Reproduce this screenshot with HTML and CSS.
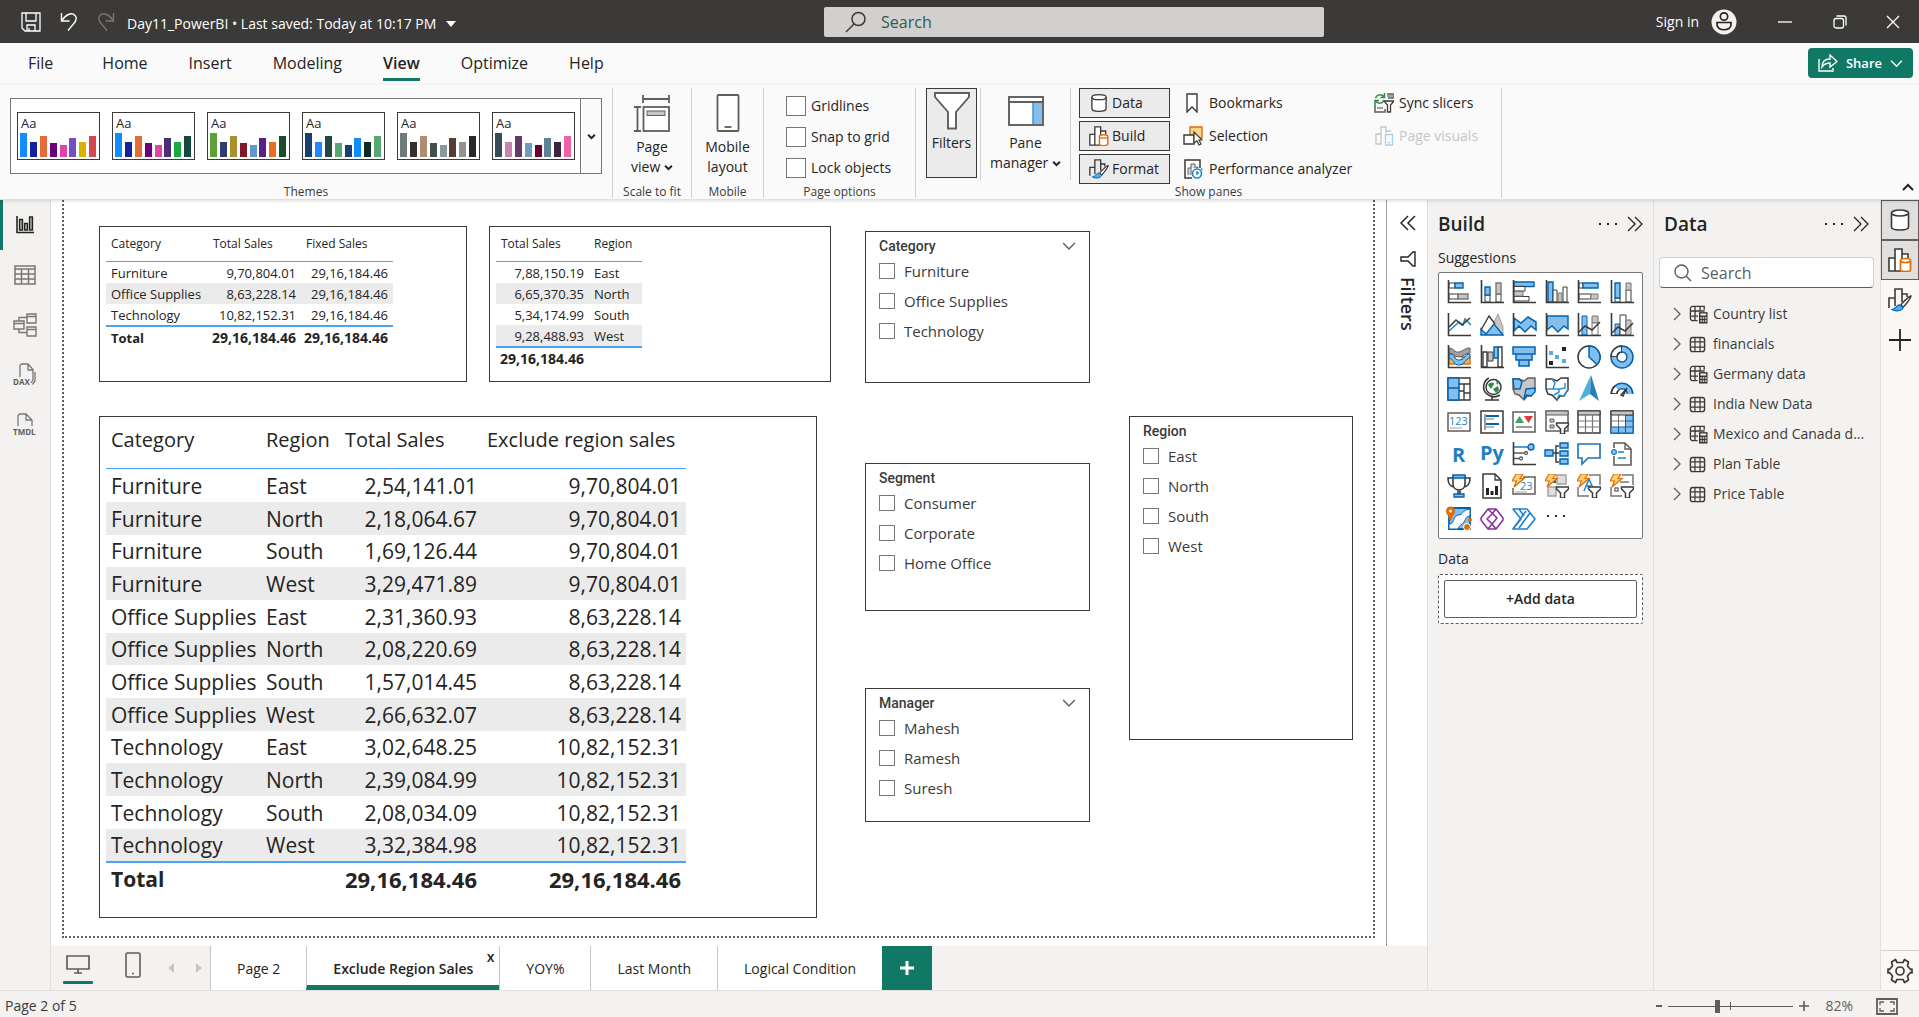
FILE: index.html
```html
<!DOCTYPE html>
<html lang="en">
<head>
<meta charset="utf-8">
<title>Day11_PowerBI</title>
<link rel="stylesheet" href="styles.css">
</head>
<body>
<svg class="defs" aria-hidden="true">
  <symbol id="bars" viewBox="0 0 79 25">
    <rect x="0" y="1" width="7" height="24" fill="var(--a)"/><rect x="10" y="10" width="7" height="15" fill="var(--b)"/>
    <rect x="20" y="4" width="7" height="21" fill="var(--c)"/><rect x="30" y="11" width="7" height="14" fill="var(--d)"/>
    <rect x="40" y="13" width="7" height="12" fill="var(--e)"/><rect x="49" y="6" width="7" height="19" fill="var(--f)"/>
    <rect x="59" y="10" width="7" height="15" fill="var(--g)"/><rect x="69" y="4" width="7" height="21" fill="var(--h)"/>
  </symbol>
  <symbol id="caret" viewBox="0 0 8 8"><path d="M1 2.5 4 5.5 7 2.5" fill="none" stroke="currentColor" stroke-width="1.8"/></symbol>
  <symbol id="chev" viewBox="0 0 12 12"><path d="M1 3.5 6 8.5 11 3.5" fill="none" stroke="currentColor" stroke-width="1.2"/></symbol>
  <symbol id="next" viewBox="0 0 16 16"><path d="M1 1 8 8 1 15M8 1 15 8 8 15" fill="none" stroke="currentColor" stroke-width="1.3"/></symbol>
  <symbol id="prev" viewBox="0 0 16 16"><path d="M8 1 1 8 8 15M15 1 8 8 15 15" fill="none" stroke="currentColor" stroke-width="1.5"/></symbol>
  <symbol id="cylinder" viewBox="0 0 24 24"><path d="M3.500 5v14c0 2 4 3 8.500 3s8.500-1 8.500-3V5" fill="#fff" stroke="#3b3a39" stroke-width="1.6"/><ellipse cx="12" cy="5" rx="8.500" ry="3" fill="#fff" stroke="#3b3a39" stroke-width="1.6"/></symbol>
  <symbol id="build" viewBox="0 0 24 24"><path d="M1 23V10h6v13zM7 23V1h7v22zM14 10V6h6v4" fill="#fff" stroke="#3b3a39" stroke-width="1.6"/><path d="M12.500 13v9c0 2 10 2 10 0v-9" fill="#fff" stroke="#e06c00" stroke-width="1.7"/><ellipse cx="17.500" cy="12.500" rx="5" ry="2" fill="#fff" stroke="#e06c00" stroke-width="1.7"/></symbol>
  <symbol id="format" viewBox="0 0 24 24"><path d="M1 20V10h6V1h7v8M14 6h5v3M7 10v8M14 9v5" fill="none" stroke="#3b3a39" stroke-width="1.6"/><path d="M23 8c-2 0-10 8-10 9l2 2c1 0 8-9 8-11z" fill="#fff" stroke="#3b3a39" stroke-width="1.400"/><path d="M12.500 17c-4-1-4 4-8.500 4.500 3 2 10.500 2 11-2z" fill="#5aa9e6" stroke="#0063b1" stroke-width="1.200"/></symbol>
  <symbol id="dots" viewBox="0 0 20 4"><path d="M1 1h2v2H1zM9 1h2v2H9zM17 1h2v2h-2z" fill="currentColor"/></symbol>
  <symbol id="table" viewBox="0 0 18 18"><rect x="1.500" y="1.500" width="15" height="15" rx="2.500" fill="none" stroke="currentColor" stroke-width="1.500"/><path d="M6.300 1.500v15M11.700 1.500v15M1.500 6.300h15M1.500 11.700h15" stroke="currentColor" stroke-width="1.300"/></symbol>
  <symbol id="calctable" viewBox="0 0 20 20"><path d="M9 16.500H4a2.500 2.500 0 0 1-2.500-2.500V4A2.500 2.500 0 0 1 4 1.500h12V5M6.300 1.500v15M11.700 1.500v5M1.500 6.300h15M1.500 11.700h8" fill="none" stroke="currentColor" stroke-width="1.400"/><rect x="10.500" y="7.500" width="9" height="12" fill="#3b3a39"/><path d="M12 9h6v2h-6zM12 13h1.500v1.500H12zM14.500 13H16v1.500h-1.500zM17 13h1.500v1.500H17zM12 16h1.500v1.500H12zM14.500 16H16v1.500h-1.500zM17 16h1.500v1.500H17z" fill="#f3f2f1"/></symbol>
  <symbol id="axes" viewBox="0 0 24 24"><path d="M1.500 0v22.500H24" fill="none" stroke="#3b3a39" stroke-width="1.600"/></symbol>
  <symbol id="bolt" viewBox="0 0 24 24"><path d="M4 0h7L8 4.500h4L2 13l2.500-6H0z" fill="#fcd17a" stroke="#e06c00" stroke-width="1.200"/></symbol>
  <symbol id="funnel" viewBox="0 0 24 24"><path d="M11.500 13h12v2l-4 4v5h-4v-5l-4-4z" fill="#fff" stroke="#3b3a39" stroke-width="1.500"/></symbol>
</svg>

<header class="titlebar">
  <div class="title-left">
    <button class="bare" aria-label="Save"><svg width="20" height="20" viewBox="0 0 20 20" fill="none" stroke="#fff" stroke-width="1.300"><path d="M1 1h18v18H4l-3-3zM5 1v8h10V1M6 19v-6h8v6M8 16v3"/></svg></button>
    <button class="bare" aria-label="Undo"><svg width="18" height="20" viewBox="0 0 18 20" fill="none" stroke="#fff" stroke-width="1.400"><path d="M1.500 1v8h8M2 8.500C6 2 12 0 15 3.500c3 3.500 0 7-2 9L8 18.500"/></svg></button>
    <button class="bare" aria-label="Redo"><svg width="18" height="20" viewBox="0 0 18 20" fill="none" stroke="#797775" stroke-width="1.400"><path d="M16.500 1v8h-8M16 8.500C12 2 6 0 3 3.500c-3 3.500 0 7 2 9l5 6"/></svg></button>
    <button class="bare doc">Day11_PowerBI • Last saved: Today at 10:17 PM <svg width="10" height="6" viewBox="0 0 10 6"><path d="M0 0h10L5 6z" fill="#fff"/></svg></button>
  </div>
  <label class="search-top"><svg width="22" height="22" viewBox="0 0 22 22" fill="none" stroke="#3b3a39" stroke-width="1.500"><circle cx="13.500" cy="8" r="6.500"/><path d="M9 13 1 21"/></svg><input type="text" placeholder="Search" aria-label="Search"></label>
  <div class="title-right">
    <button class="bare signin">Sign in <svg width="26" height="26" viewBox="0 0 26 26"><circle cx="13" cy="13" r="12.500" fill="#f3f2f1"/><circle cx="13" cy="7.500" r="3.700" fill="none" stroke="#252423" stroke-width="1.700"/><path d="M6 13.500h14v2c0 7-14 7-14 0z" fill="none" stroke="#252423" stroke-width="1.700"/></svg></button>
    <button class="bare win" aria-label="Minimize"><svg width="14" height="14" viewBox="0 0 14 14"><path d="M0 7h14" stroke="#fff" stroke-width="1.300"/></svg></button>
    <button class="bare win" aria-label="Restore"><svg width="14" height="14" viewBox="0 0 14 14" fill="none" stroke="#fff" stroke-width="1.300"><rect x="1" y="3.500" width="9.500" height="9.500" rx="2"/><path d="M3.500 1H11c1.500 0 2 .5 2 2v7.500"/></svg></button>
    <button class="bare win" aria-label="Close"><svg width="14" height="14" viewBox="0 0 14 14"><path d="M1 1l12 12M13 1 1 13" stroke="#fff" stroke-width="1.300"/></svg></button>
  </div>
</header>

<nav class="menu">
  <a href="#" class="file">File</a><a href="#">Home</a><a href="#">Insert</a><a href="#">Modeling</a><a href="#" class="on">View</a><a href="#">Optimize</a><a href="#">Help</a>
  <button class="share"><svg width="20" height="18" viewBox="0 0 20 18" fill="none" stroke="#fff" stroke-width="1.400"><path d="M1 5v12h14v-3"/><path d="M4 13c0-5 3-8 8-8V1l7 6.500-7 5.500V9c-4 0-6 1-8 4z"/></svg>Share<svg width="13" height="13"><use href="#chev"/></svg></button>
</nav>

<div class="ribbon">
  <section class="group g-themes">
    <div class="gbody"><div class="gallery">
      <button class="thumb t1" aria-label="Theme 1"><span>Aa</span><svg width="79" height="25"><use href="#bars"/></svg></button>
      <button class="thumb t2" aria-label="Theme 2"><span>Aa</span><svg width="79" height="25"><use href="#bars"/></svg></button>
      <button class="thumb t3" aria-label="Theme 3"><span>Aa</span><svg width="79" height="25"><use href="#bars"/></svg></button>
      <button class="thumb t4" aria-label="Theme 4"><span>Aa</span><svg width="79" height="25"><use href="#bars"/></svg></button>
      <button class="thumb t5" aria-label="Theme 5"><span>Aa</span><svg width="79" height="25"><use href="#bars"/></svg></button>
      <button class="thumb t6" aria-label="Theme 6"><span>Aa</span><svg width="79" height="25"><use href="#bars"/></svg></button>
      <button class="more" aria-label="More themes"><svg width="9" height="9"><use href="#caret"/></svg></button>
    </div></div>
    <h2>Themes</h2>
  </section>
  <section class="group g-scale">
    <div class="gbody"><button class="big"><svg width="38" height="38" viewBox="0 0 38 38" fill="none" stroke="#605e5c" stroke-width="1.800"><path d="M10 1v8M36 1v8M10 5h26M1 13h7M1 37h7M4.500 13v24"/><rect x="10.500" y="13" width="25.500" height="24" fill="#fff"/><rect x="14" y="17" width="18" height="4.500" fill="#c8c6c4" stroke-width="1"/></svg><span>Page<br>view <svg width="9" height="9"><use href="#caret"/></svg></span></button></div>
    <h2>Scale to fit</h2>
  </section>
  <section class="group g-mobile">
    <div class="gbody"><button class="big"><svg width="38" height="38" viewBox="0 0 38 38" fill="#fff" stroke="#605e5c" stroke-width="1.800"><rect x="8.500" y="1" width="21" height="36" rx="1"/><path d="M15.500 33h7"/></svg><span>Mobile<br>layout</span></button></div>
    <h2>Mobile</h2>
  </section>
  <section class="group g-options">
    <div class="gbody checks">
      <label><input type="checkbox">Gridlines</label>
      <label><input type="checkbox">Snap to grid</label>
      <label><input type="checkbox">Lock objects</label>
    </div>
    <h2>Page options</h2>
  </section>
  <section class="group g-panes">
    <div class="gbody panes">
      <button class="filters on"><svg width="36" height="38" viewBox="0 0 36 38"><path d="M1 1h34v4L22 20v16.500h-8V20L1 5z" fill="#fff" stroke="#605e5c" stroke-width="1.900"/></svg>Filters</button>
      <button class="big manager"><svg width="36" height="30" viewBox="0 0 36 30"><rect x="1" y="1" width="34" height="28" fill="#fff" stroke="#605e5c" stroke-width="1.900"/><path d="M1 6h34" stroke="#605e5c" stroke-width="2"/><path d="M25 7h9v21h-9z" fill="#83beec"/><path d="M25 7v21" stroke="#3a96dd" stroke-width="1.500"/></svg><span>Pane<br>manager <svg width="9" height="9"><use href="#caret"/></svg></span></button>
      <div class="pcol pressed">
        <button><svg width="20" height="20"><use href="#cylinder"/></svg>Data</button>
        <button><svg width="20" height="20"><use href="#build"/></svg>Build</button>
        <button><svg width="20" height="20"><use href="#format"/></svg>Format</button>
      </div>
      <div class="pcol plain">
        <button><svg width="20" height="20" viewBox="0 0 20 20"><path d="M4 1h10v18l-5-5-5 5z" fill="#fff" stroke="#3b3a39" stroke-width="1.400"/></svg>Bookmarks</button>
        <button><svg width="20" height="20" viewBox="0 0 20 20"><path d="M7 1h12v11H7z" fill="#fcd58c" stroke="#e06c00" stroke-width="1.400"/><path d="M1 9h10v9H1z" fill="#fff" stroke="#3b3a39" stroke-width="1.400"/><path d="M11 6v11l3-2 2 4 2-1-2-4h3z" fill="#fff" stroke="#3b3a39" stroke-width="1.200"/></svg>Selection</button>
        <button><svg width="20" height="20" viewBox="0 0 20 20"><path d="M9 19H2V1h15v8" fill="#fff" stroke="#3b3a39" stroke-width="1.500"/><path d="M5 16V9h3v7M8 9V5h4v4" fill="#e1dfdd" stroke="#605e5c"/><circle cx="14" cy="14.500" r="4.500" fill="#fff" stroke="#1f87c9" stroke-width="1.600"/><path d="M14 12v3l2-1.500M12.500 8.500h3M18 9.500l1.500 1.500" stroke="#1f87c9" stroke-width="1.400" fill="none"/></svg>Performance analyzer</button>
      </div>
      <div class="pcol plain last">
        <button><svg width="20" height="20" viewBox="0 0 20 20" fill="none"><path d="M1 12v7h10v-3M13 1h6v4h-5" stroke="#605e5c" stroke-width="1.500"/><path d="M3 15h6M13 3h6" stroke="#a19f9d" stroke-width="2"/><path d="M10 8h10l-3.500 4v7h-3v-7z" fill="#fff" stroke="#3b3a39" stroke-width="1.300"/><path d="M1.500 5C3 1 8 1 10 4M10.500 0v4.500H6.500M10 7c-1.500 4-6 4-8.500 1M1 12V7.500h4" stroke="#2e8b45" stroke-width="1.500"/></svg>Sync slicers</button>
        <button disabled><svg width="20" height="20" viewBox="0 0 20 20" fill="none" stroke="#c8c6c4" stroke-width="1.300"><path d="M8 18H2V8h5M7 18V1h5v6M12 5h5"/><path d="M11.500 8.500h7v10.500h-7zM14 16.500h2" stroke="#a9d0ee"/></svg>Page visuals</button>
      </div>
    </div>
    <h2>Show panes</h2>
  </section>
  <button class="bare collapse" aria-label="Collapse ribbon"><svg width="12" height="8" viewBox="0 0 12 8"><path d="M1 7 6 2l5 5" fill="none" stroke="#252423" stroke-width="2"/></svg></button>
</div>

<div class="work">
  <nav class="views">
    <button class="on" aria-label="Report view"><svg width="20" height="20" viewBox="0 0 20 20" fill="#a19f9d" stroke="#252423" stroke-width="1.300"><path d="M2 1v16.500h17" fill="none" stroke-width="1.600"/><path d="M4.500 4.500h3V15h-3zM9.500 8.500h3V15h-3zM14.500 2h3v13h-3z"/></svg></button>
    <button aria-label="Table view"><svg width="22" height="20" viewBox="0 0 22 20" fill="none" stroke="#797775" stroke-width="1.500"><path d="M1 1h20v18H1zM1 4h20M1 9h20M1 14h20M7.500 4v15M14.500 4v15"/></svg></button>
    <button aria-label="Model view"><svg width="24" height="24" viewBox="0 0 24 24" fill="none" stroke="#797775" stroke-width="1.400"><path d="M1 8h10v8H1zM1 10.500h10M14 1h9v9h-9zM14 3.500h9M14 14h9v9h-9zM14 16.500h9M6 8V4.500h8M6 16v3.500h8"/></svg></button>
    <button aria-label="DAX query view"><svg width="24" height="24" viewBox="0 0 24 24" fill="none" stroke="#797775" stroke-width="1.300"><path d="M7 14V2.500L8.500 1H15l5 5.500V17l-2 3M15 1v6h5M22 9v9l-2.500 3.500"/><text x="0" y="22" class="glyph">DAX</text></svg></button>
    <button aria-label="TMDL view"><svg width="24" height="24" viewBox="0 0 24 24" fill="none" stroke="#797775" stroke-width="1.300"><path d="M5 13V2.500L6.500 1H13l6 6v6M13 1v6h6"/><text x="0" y="22" class="glyph">TMDL</text></svg></button>
  </nav>

  <div class="center">
    <div class="center-top">
    <main class="canvas">
      <div class="page">
        <div class="visual v1">
          <table class="data small">
            <colgroup><col class="w102"><col class="w93"><col class="w92"></colgroup>
            <thead><tr><th>Category</th><th>Total Sales</th><th>Fixed Sales</th></tr></thead>
            <tbody>
              <tr><td>Furniture</td><td class="n">9,70,804.01</td><td class="n">29,16,184.46</td></tr>
              <tr><td>Office Supplies</td><td class="n">8,63,228.14</td><td class="n">29,16,184.46</td></tr>
              <tr><td>Technology</td><td class="n">10,82,152.31</td><td class="n">29,16,184.46</td></tr>
            </tbody>
            <tfoot><tr><td>Total</td><td class="n">29,16,184.46</td><td class="n">29,16,184.46</td></tr></tfoot>
          </table>
        </div>
        <div class="visual v2">
          <table class="data small">
            <colgroup><col class="w93"><col class="w53"></colgroup>
            <thead><tr><th>Total Sales</th><th>Region</th></tr></thead>
            <tbody>
              <tr><td class="n">7,88,150.19</td><td>East</td></tr>
              <tr><td class="n">6,65,370.35</td><td>North</td></tr>
              <tr><td class="n">5,34,174.99</td><td>South</td></tr>
              <tr><td class="n">9,28,488.93</td><td>West</td></tr>
            </tbody>
            <tfoot><tr><td class="n">29,16,184.46</td><td></td></tr></tfoot>
          </table>
        </div>
        <div class="visual v3">
          <table class="data large">
            <colgroup><col class="w155"><col class="w79"><col class="w142"><col class="w204"></colgroup>
            <thead><tr><th>Category</th><th>Region</th><th>Total Sales</th><th>Exclude region sales</th></tr></thead>
            <tbody>
              <tr><td>Furniture</td><td>East</td><td class="n">2,54,141.01</td><td class="n">9,70,804.01</td></tr>
              <tr><td>Furniture</td><td>North</td><td class="n">2,18,064.67</td><td class="n">9,70,804.01</td></tr>
              <tr><td>Furniture</td><td>South</td><td class="n">1,69,126.44</td><td class="n">9,70,804.01</td></tr>
              <tr><td>Furniture</td><td>West</td><td class="n">3,29,471.89</td><td class="n">9,70,804.01</td></tr>
              <tr><td>Office Supplies</td><td>East</td><td class="n">2,31,360.93</td><td class="n">8,63,228.14</td></tr>
              <tr><td>Office Supplies</td><td>North</td><td class="n">2,08,220.69</td><td class="n">8,63,228.14</td></tr>
              <tr><td>Office Supplies</td><td>South</td><td class="n">1,57,014.45</td><td class="n">8,63,228.14</td></tr>
              <tr><td>Office Supplies</td><td>West</td><td class="n">2,66,632.07</td><td class="n">8,63,228.14</td></tr>
              <tr><td>Technology</td><td>East</td><td class="n">3,02,648.25</td><td class="n">10,82,152.31</td></tr>
              <tr><td>Technology</td><td>North</td><td class="n">2,39,084.99</td><td class="n">10,82,152.31</td></tr>
              <tr><td>Technology</td><td>South</td><td class="n">2,08,034.09</td><td class="n">10,82,152.31</td></tr>
              <tr><td>Technology</td><td>West</td><td class="n">3,32,384.98</td><td class="n">10,82,152.31</td></tr>
            </tbody>
            <tfoot><tr><td>Total</td><td></td><td class="n">29,16,184.46</td><td class="n">29,16,184.46</td></tr></tfoot>
          </table>
        </div>
        <div class="visual slicer s-category">
          <h3>Category<svg width="14" height="14"><use href="#chev"/></svg></h3>
          <label><input type="checkbox">Furniture</label><label><input type="checkbox">Office Supplies</label><label><input type="checkbox">Technology</label>
        </div>
        <div class="visual slicer s-segment">
          <h3>Segment</h3>
          <label><input type="checkbox">Consumer</label><label><input type="checkbox">Corporate</label><label><input type="checkbox">Home Office</label>
        </div>
        <div class="visual slicer s-manager">
          <h3>Manager<svg width="14" height="14"><use href="#chev"/></svg></h3>
          <label><input type="checkbox">Mahesh</label><label><input type="checkbox">Ramesh</label><label><input type="checkbox">Suresh</label>
        </div>
        <div class="visual slicer s-region">
          <h3>Region</h3>
          <label><input type="checkbox">East</label><label><input type="checkbox">North</label><label><input type="checkbox">South</label><label><input type="checkbox">West</label>
        </div>
      </div>
    </main>
    <aside class="filterpane">
      <button class="bare" aria-label="Expand filters"><svg width="16" height="16"><use href="#prev"/></svg></button>
      <svg width="16" height="16" viewBox="0 0 16 16"><path d="M15 1v14h-2L8 10H1V6h7l5-5z" fill="none" stroke="#252423" stroke-width="1.400"/></svg>
      <h2>Filters</h2>
    </aside>
    </div>
    <div class="tabs">
      <button class="device on" aria-label="Desktop layout"><svg width="24" height="20" viewBox="0 0 24 20" fill="none" stroke="#605e5c" stroke-width="1.700"><path d="M1 1h22v13H1zM12 14v4M8 18h8"/></svg></button>
      <button class="device phone" aria-label="Mobile layout"><svg width="16" height="26" viewBox="0 0 16 26" fill="none" stroke="#605e5c" stroke-width="1.600"><rect x="1" y="1" width="14" height="24" rx="1.500"/><path d="M7 21.500h2"/></svg></button>
      <button class="arrow" aria-label="Previous pages"><svg width="6" height="10" viewBox="0 0 6 10"><path d="M6 0v10L0 5z" fill="#c8c6c4"/></svg></button>
      <button class="arrow" aria-label="Next pages"><svg width="6" height="10" viewBox="0 0 6 10"><path d="M0 0v10l6-5z" fill="#c8c6c4"/></svg></button>
      <a href="#" class="tab">Page 2</a><a href="#" class="tab on">Exclude Region Sales<span class="x">x</span></a><a href="#" class="tab">YOY%</a><a href="#" class="tab">Last Month</a><a href="#" class="tab">Logical Condition</a>
      <button class="add" aria-label="New page"><svg width="14" height="14" viewBox="0 0 14 14"><path d="M7 0v14M0 7h14" stroke="#fff" stroke-width="3"/></svg></button>
    </div>
  </div>

  <aside class="pane build">
    <header><h2>Build</h2><button class="bare" aria-label="More options"><svg width="20" height="4"><use href="#dots"/></svg></button><button class="bare" aria-label="Collapse"><svg width="16" height="16"><use href="#next"/></svg></button></header>
    <h3>Suggestions</h3>
    <div class="icons">
      <svg viewBox="0 0 24 24"><path d="M2 3h6v5H2zM2 14h9v5H2z" fill="#fff" stroke="#3b3a39"/><path d="M8 3h8v5H8z" fill="#83beec" stroke="#0063b1" stroke-width="1.400"/><path d="M11 14h10v5H11z" fill="#c8c6c4" stroke="#797775" stroke-width="1.400"/><use href="#axes"/></svg>
      <svg viewBox="0 0 24 24"><path d="M5 15h5v7H5zM16 14h5v8h-5z" fill="#fff" stroke="#3b3a39"/><path d="M5 7h5v8H5z" fill="#83beec" stroke="#0063b1" stroke-width="1.400"/><path d="M16 3h5v11h-5z" fill="#c8c6c4" stroke="#797775" stroke-width="1.400"/><use href="#axes"/></svg>
      <svg viewBox="0 0 24 24"><path d="M2 2h20v4.500H2z" fill="#83beec" stroke="#0063b1" stroke-width="1.400"/><path d="M2 6.500h11V11H2zM2 16.500h15V21H2z" fill="#fff" stroke="#3b3a39"/><path d="M2 11.500h9V16H2z" fill="#c8c6c4" stroke="#797775"/><use href="#axes"/></svg>
      <svg viewBox="0 0 24 24"><path d="M3 2h5v20H3z" fill="#83beec" stroke="#0063b1" stroke-width="1.400"/><path d="M8 10h4v12H8zM18 7h4v15h-4z" fill="#fff" stroke="#3b3a39"/><path d="M13 13h4v9h-4z" fill="#c8c6c4" stroke="#797775"/><use href="#axes"/></svg>
      <svg viewBox="0 0 24 24"><path d="M2 3h4v5H2zM2 14h12v5H2z" fill="#fff" stroke="#3b3a39"/><path d="M6 3h15v5H6z" fill="#83beec" stroke="#0063b1" stroke-width="1.400"/><path d="M14 14h7v5h-7z" fill="#c8c6c4" stroke="#797775"/><use href="#axes"/></svg>
      <svg viewBox="0 0 24 24"><path d="M5 18h5v4H5zM16 10h5v12h-5z" fill="#fff" stroke="#3b3a39"/><path d="M5 3h5v15H5z" fill="#83beec" stroke="#0063b1" stroke-width="1.400"/><path d="M16 3h5v7h-5z" fill="#c8c6c4" stroke="#797775"/><use href="#axes"/></svg>

      <svg viewBox="0 0 24 24" fill="none"><path d="m2 18 10-9 4 3 2-6 6 6" stroke="#1f87c9" stroke-width="1.500"/><path d="m2 14 7-7 6 5 8-7" stroke="#3b3a39" stroke-width="1.500"/><use href="#axes"/></svg>
      <svg viewBox="0 0 24 24"><path d="M12 13 18 1l5 13v8z" fill="#c8c6c4" stroke="#a19f9d"/><path d="M1 17 9 3l6 8" fill="#fff" stroke="#3b3a39" stroke-width="1.400"/><path d="m1 16 5 5 8-10 9 11H1z" fill="#83beec" stroke="#0063b1" stroke-width="1.400"/></svg>
      <svg viewBox="0 0 24 24"><path d="m2 5 7 5 7-6 8 5v8l-5-4-6 6-6-6-5 5z" fill="#83beec" stroke="#0063b1" stroke-width="1.500"/><use href="#axes"/></svg>
      <svg viewBox="0 0 24 24"><path d="M2 3h21v13l-4-3-6 6-6-6-5 4z" fill="#83beec" stroke="#0063b1" stroke-width="1.400"/><use href="#axes"/></svg>
      <svg viewBox="0 0 24 24" fill="none"><path d="M5 3h5v19H5z" fill="#83beec" stroke="#0063b1"/><path d="M15 3h6v7h-6z" fill="#c8c6c4" stroke="#797775"/><path d="M15 10h6v12h-6z" fill="#fff" stroke="#797775"/><path d="m2 19 6-6 7 4 8-8" stroke="#3b3a39" stroke-width="1.500"/><use href="#axes"/></svg>
      <svg viewBox="0 0 24 24" fill="none"><path d="M5 11h5v11H5z" fill="#83beec" stroke="#0063b1"/><path d="M10 2h6v20h-6z" fill="#fff" stroke="#3b3a39"/><path d="M16 7h5v15h-5z" fill="#c8c6c4" stroke="#797775"/><path d="m2 20 6-6 7 4 8-8" stroke="#3b3a39" stroke-width="1.500"/><use href="#axes"/></svg>

      <svg viewBox="0 0 24 24" fill="none"><path d="M2 12h6v7H2zM15 12h8v7h-8z" fill="#fcb45c" stroke="#e06c00" stroke-width="1.400"/><path d="M2 3c5 0 5 5 10 4s5-4 11-4v5c-5 0-6 4-11 4S7 8 2 8z" fill="#a19f9d" stroke="#605e5c"/><path d="M2 9c6-1 4 6 10 6s5-6 11-6v4c-4 0-5 7-11 7S7 14 2 13z" fill="#83beec" stroke="#0063b1"/><use href="#axes"/></svg>
      <svg viewBox="0 0 24 24"><path d="M3 7h4v15H3zM18 2h4v20h-4z" fill="#fff" stroke="#3b3a39" stroke-width="1.400"/><path d="M8 7h5v9H8z" fill="#c8c6c4" stroke="#3b3a39"/><path d="M14 2h4v11h-4z" fill="#83beec" stroke="#0063b1" stroke-width="1.400"/><use href="#axes"/></svg>
      <svg viewBox="0 0 24 24" fill="#83beec" stroke="#0063b1" stroke-width="1.500"><path d="M1 2h22v7H1zM4 9h16v6H4zM7 15h10v6H7z"/></svg>
      <svg viewBox="0 0 24 24"><path d="M4 6h4v4H4zM10 10h4v4h-4zM17 14h4v4h-4z" fill="#5ea9df"/><path d="M17 2h4v4h-4zM4 16h4v4H4z" fill="#252423"/><use href="#axes"/></svg>
      <svg viewBox="0 0 24 24"><circle cx="12" cy="12" r="11" fill="#fff" stroke="#3b3a39" stroke-width="1.500"/><path d="M12 1a11 11 0 0 1 8 18.500L12 12z" fill="#83beec" stroke="#0063b1" stroke-width="1.500"/></svg>
      <svg viewBox="0 0 24 24"><circle cx="12" cy="12" r="8" fill="none" stroke="#0063b1" stroke-width="7.500"/><circle cx="12" cy="12" r="8" fill="none" stroke="#83beec" stroke-width="4.500"/><path d="M4 12a8 8 0 0 1 8-8" fill="none" stroke="#3b3a39" stroke-width="7.500"/><path d="M4 11a8 8 0 0 1 7-7" fill="none" stroke="#fff" stroke-width="4.500"/></svg>

      <svg viewBox="0 0 24 24"><path d="M1 1h22v22H1z" fill="#fff" stroke="#3b3a39" stroke-width="1.400"/><path d="M1 1h11v10H1zM1 11h11v12H1z" fill="#83beec" stroke="#0063b1" stroke-width="1.500"/><path d="M12 7h11M17 7v16M12 14h5M17 16h6" stroke="#3b3a39" stroke-width="1.400"/></svg>
      <svg viewBox="0 0 24 24" fill="none"><circle cx="13.500" cy="10" r="7.500" fill="#fff" stroke="#3b3a39" stroke-width="1.500"/><path d="M8 8c2-3 5-3 6-1l-3 5zM13 12l5-3 1 4-3 3zM16 4l3 2-2 2z" fill="#2e8b45"/><path d="M9 1C3 4 2 12 6 16s9 5 14 2M12 20v3M5 23h14" stroke="#3b3a39" stroke-width="1.600"/></svg>
      <svg viewBox="0 0 24 24"><path d="M1 2h6l5 2 4-3h7v12l-3 4-1 2h-4l-3 4-5-5-4-1-2-5z" fill="#c8c6c4" stroke="#605e5c" stroke-width="1.400"/><path d="M1 2h6l3 3-2 7H2zM14 12l9-1v4l-4 4-4-1-3 4z" fill="#83beec" stroke="#0063b1" stroke-width="1.400"/></svg>
      <svg viewBox="0 0 24 24" fill="#fff" stroke-width="1.500"><path d="M1 2h6l5 2 4-3h7v12l-3 4-1 2h-4l-3 4-5-5-4-1-2-5z" stroke="#3b3a39"/><path d="m7 2 3 4-2 6H2M8 12h7l5-1V6M9 18l5-3v-3M23 12l-4 7-5-1-2 5" fill="none" stroke="#2b8fd6"/></svg>
      <svg viewBox="0 0 24 24"><path d="M14-2 2 24l11-7z" fill="#4fb0dc"/><path d="m14-2 8 26-9-7z" fill="#2480b8"/></svg>
      <svg viewBox="0 0 24 24" fill="none"><path d="M4 17a8 8 0 0 1 16 0" stroke="#0063b1" stroke-width="7"/><path d="M4 17a8 8 0 0 1 16 0" stroke="#83beec" stroke-width="4"/><path d="M4 17a8 8 0 0 1 3-6" stroke="#3b3a39" stroke-width="7"/><path d="M4 16a8 8 0 0 1 3-5" stroke="#fff" stroke-width="4"/><path d="m11 18 6-7-4 8z" stroke="#3b3a39" stroke-width="1.500"/></svg>

      <svg viewBox="0 0 24 24"><path d="M1 3h22v18H1z" fill="#fff" stroke="#605e5c" stroke-width="1.500"/><path d="M3 18h12" stroke="#a19f9d"/><text x="2" y="15" class="num">123</text></svg>
      <svg viewBox="0 0 24 24"><path d="M1 1h22v22H1z" fill="#fff" stroke="#3b3a39" stroke-width="1.500"/><path d="M5 4v16" stroke="#3b3a39"/><path d="M6 6h13M6 14h13" stroke="#0063b1" stroke-width="2"/><path d="M6 9h8M6 17h8" stroke="#797775"/></svg>
      <svg viewBox="0 0 24 24"><path d="M1 2h22v20H1z" fill="#fff" stroke="#605e5c" stroke-width="1.500"/><path d="m3 13 4.500-7 4.500 7z" fill="#3fa35b"/><path d="m12 6 4.500 7L21 6z" fill="#dc3b3b"/><path d="M4 17h16" stroke="#797775" stroke-width="1.500"/></svg>
      <svg viewBox="0 0 24 24"><path d="M1 1h22v20H1z" fill="#fff" stroke="#605e5c" stroke-width="1.500"/><path d="M1 1h22v4H1z" fill="#c8c6c4" stroke="#605e5c"/><path d="M5 9h4v3H5zM5 15h4v3H5z" fill="#c8c6c4" stroke="#605e5c"/><use href="#funnel"/></svg>
      <svg viewBox="0 0 24 24"><path d="M1 1h22v22H1z" fill="#fff" stroke="#3b3a39" stroke-width="1.500"/><path d="M1 1h22v4H1z" fill="#c8c6c4" stroke="#3b3a39"/><path d="M8.500 5v18M15.500 5v18M1 11h22M1 17h22" stroke="#797775" stroke-width="1.200"/></svg>
      <svg viewBox="0 0 24 24"><path d="M1 1h22v22H1z" fill="#fff" stroke="#3b3a39" stroke-width="1.500"/><path d="M8.500 5v12M1 11h15" stroke="#797775"/><path d="M15.500 5H23v18H1v-6h14.500z" fill="#83beec" stroke="#0063b1"/><path d="M8.500 17v6M15.500 17v6M16 11h7M16 17h7" stroke="#0063b1"/><path d="M1 1h22v4H1z" fill="#c8c6c4" stroke="#3b3a39"/></svg>

      <svg viewBox="0 0 24 24"><text x="5" y="20" class="lang">R</text></svg>
      <svg viewBox="0 0 24 24"><text x="0" y="18" class="lang">Py</text></svg>
      <svg viewBox="0 0 24 24" fill="#fff" stroke="#605e5c" stroke-width="1.300"><path d="M2 5h14" stroke="#1f87c9" stroke-width="1.600"/><circle cx="19" cy="5" r="3" fill="#83beec" stroke="#0063b1"/><path d="M2 11h11M2 16.500h5"/><circle cx="14" cy="11" r="1.500"/><circle cx="9" cy="16.500" r="1.500"/><use href="#axes"/></svg>
      <svg viewBox="0 0 24 24"><path d="M8 11h6M14 4h-3v16h3" fill="none" stroke="#3b3a39" stroke-width="1.500"/><path d="M0 8h8v6H0zM15 1h8v5h-8zM15 9h8v5h-8zM15 17h8v5h-8z" fill="#83beec" stroke="#0063b1" stroke-width="1.400"/></svg>
      <svg viewBox="0 0 24 24"><path d="M1 2h22v14H11l-6 6v-6H1z" fill="#fff" stroke="#1f6fb5" stroke-width="1.600"/></svg>
      <svg viewBox="0 0 24 24"><path d="M4 6V1h11l6 6v16H4v-9" fill="#fff" stroke="#605e5c" stroke-width="1.600"/><path d="M15 1v6h6" fill="none" stroke="#605e5c" stroke-width="1.400"/><circle cx="4" cy="10" r="2.500" fill="#83beec" stroke="#0063b1"/><path d="M8 10h6M8 16h8" stroke="#1f87c9" stroke-width="1.500"/></svg>

      <svg viewBox="0 0 24 24"><path d="M6 4H1c0 6 2 8 6 9M18 4h5c0 6-2 8-6 9M6 2h12v8c0 8-12 8-12 0zM11 16v4h2v-4" fill="#fff" stroke="#3b3a39" stroke-width="1.600"/><path d="M6 1h12v3H6zM7 20h10v3H7z" fill="#83beec" stroke="#0063b1" stroke-width="1.300"/></svg>
      <svg viewBox="0 0 24 24"><path d="M3 0h12l6 6v18H3z" fill="#fff" stroke="#3b3a39" stroke-width="1.500"/><path d="M15 0v6h6" fill="none" stroke="#3b3a39" stroke-width="1.300"/><path d="M6 14h3v7H6zM10.500 17h3v4h-3zM15 12h3v9h-3z" fill="#252423"/></svg>
      <svg viewBox="0 0 24 24"><path d="M11 3h12v17H1v-6" fill="#fff" stroke="#605e5c" stroke-width="1.500"/><text x="8" y="16" class="num">23</text><path d="M3 18h12" stroke="#a19f9d"/><use href="#bolt"/></svg>
      <svg viewBox="0 0 24 24"><path d="M12 1h9v9h-9zM3 13h8v9H3z" fill="#e1dfdd" stroke="#a19f9d" stroke-width="1.400"/><path d="M8 9h3v-4z" fill="#0063b1"/><use href="#bolt"/><use href="#funnel"/></svg>
      <svg viewBox="0 0 24 24"><path d="M12 1h11v10M1 13v9h11" fill="none" stroke="#797775" stroke-width="1.500"/><path d="m7 17 5-12 4 9M9 12h5" fill="none" stroke="#1f87c9" stroke-width="1.500"/><use href="#bolt"/><use href="#funnel"/></svg>
      <svg viewBox="0 0 24 24"><path d="M12 1h11v10M1 13v9h11M10 8h9M5 14h3v3H5z" fill="none" stroke="#797775" stroke-width="1.500"/><use href="#bolt"/><use href="#funnel"/></svg>

      <svg viewBox="0 0 24 24"><path d="M2 1h21v21H2z" fill="#83beec" stroke="#0063b1" stroke-width="1.800"/><path d="M2 17c6 0 3-7 9-9 6 0 3-5 12-6v7c-4 0-4 3-6 6s-5 3-6 7H2z" fill="#fff" stroke="#0063b1"/><circle cx="3.500" cy="4" r="4.500" fill="#e06c00"/><path d="m-.5 6 4 8 4-8z" fill="#e06c00"/><circle cx="3.500" cy="4" r="1.500" fill="#fff"/><circle cx="20" cy="20" r="3.500" fill="#e06c00" stroke="#fff"/><circle cx="23" cy="13" r="2" fill="#e06c00"/></svg>
      <svg viewBox="0 0 24 24" fill="#fff" stroke="#8a2e9a" stroke-width="1.500" stroke-linejoin="round"><path d="M8 2h8l7 9v2l-7 9H8l-7-9v-2z"/><path d="m8 2 9 9-5 6-5-5 5-5 4-5M12 17l4 5M12 17l-4 5" fill="none"/></svg>
      <svg viewBox="0 0 24 24" fill="#fff" stroke="#1f7fd6" stroke-width="1.600" stroke-linejoin="round"><path d="M1 2h14l8 10-8 10H1l8-10z"/><path d="m7 2 5 7M14 4 1 22M18 6 7 21" fill="none"/></svg>
      <svg viewBox="0 0 24 24"><path d="M2 8h2v2H2zM10 8h2v2h-2zM18 8h2v2h-2z" fill="#252423"/></svg>
    </div>
    <h3>Data</h3>
    <div class="well"><button>+Add data</button></div>
  </aside>

  <aside class="pane datapane">
    <header><h2>Data</h2><button class="bare" aria-label="More options"><svg width="20" height="4"><use href="#dots"/></svg></button><button class="bare" aria-label="Collapse"><svg width="16" height="16"><use href="#next"/></svg></button></header>
    <label class="search-data"><svg width="18" height="18" viewBox="0 0 18 18" fill="none" stroke="#605e5c" stroke-width="1.400"><circle cx="7.500" cy="7.500" r="6.500"/><path d="m12 12 5 5"/></svg><input type="text" placeholder="Search" aria-label="Search data"></label>
    <ul>
      <li><svg width="8" height="14" class="arr" viewBox="0 0 8 14"><path d="m1 1 6 6-6 6"/></svg><svg width="19" height="19"><use href="#calctable"/></svg><span>Country list</span></li>
      <li><svg width="8" height="14" class="arr" viewBox="0 0 8 14"><path d="m1 1 6 6-6 6"/></svg><svg width="17" height="17"><use href="#table"/></svg><span>financials</span></li>
      <li><svg width="8" height="14" class="arr" viewBox="0 0 8 14"><path d="m1 1 6 6-6 6"/></svg><svg width="19" height="19"><use href="#calctable"/></svg><span>Germany data</span></li>
      <li><svg width="8" height="14" class="arr" viewBox="0 0 8 14"><path d="m1 1 6 6-6 6"/></svg><svg width="17" height="17"><use href="#table"/></svg><span>India New Data</span></li>
      <li><svg width="8" height="14" class="arr" viewBox="0 0 8 14"><path d="m1 1 6 6-6 6"/></svg><svg width="19" height="19"><use href="#calctable"/></svg><span>Mexico and Canada d...</span></li>
      <li><svg width="8" height="14" class="arr" viewBox="0 0 8 14"><path d="m1 1 6 6-6 6"/></svg><svg width="17" height="17"><use href="#table"/></svg><span>Plan Table</span></li>
      <li><svg width="8" height="14" class="arr" viewBox="0 0 8 14"><path d="m1 1 6 6-6 6"/></svg><svg width="17" height="17"><use href="#table"/></svg><span>Price Table</span></li>
    </ul>
  </aside>

  <nav class="rail">
    <button class="on" aria-label="Data"><svg width="24" height="24"><use href="#cylinder"/></svg></button>
    <button class="on" aria-label="Build"><svg width="24" height="24"><use href="#build"/></svg></button>
    <button aria-label="Format"><svg width="24" height="24"><use href="#format"/></svg></button>
    <button aria-label="Add pane"><svg width="22" height="22" viewBox="0 0 22 22"><path d="M11 0v22M0 11h22" stroke="#252423" stroke-width="1.800"/></svg></button>
    <button class="gear" aria-label="Settings"><svg width="26" height="26" viewBox="0 0 26 26" fill="none" stroke="#3b3a39" stroke-width="1.700"><circle cx="13" cy="13" r="4"/><path d="M8.500 1.500 10 4.500h6l1.500-3 4 2.500-1 4 3 3.500L25 11v4l-1.500-.5-3 3.500 1 4-4 2.500-1.500-3h-6l-1.500 3-4-2.500 1-4-3-3.500L1 15v-4l1.500.5 3-3.500-1-4z" stroke-linejoin="round"/></svg></button>
  </nav>
</div>

<footer class="status">
  <span>Page 2 of 5</span>
  <div class="zoom">
    <button class="bare" aria-label="Zoom out"><svg width="6" height="10" viewBox="0 0 6 10"><path d="M0 5h6" stroke="#605e5c" stroke-width="2"/></svg></button>
    <input type="range" min="0" max="100" value="39" aria-label="Zoom">
    <button class="bare" aria-label="Zoom in"><svg width="10" height="10" viewBox="0 0 10 10"><path d="M5 0v10M0 5h10" stroke="#605e5c" stroke-width="1.600"/></svg></button>
    <span class="pct">82%</span>
    <button class="bare" aria-label="Fit to page"><svg width="22" height="17" viewBox="0 0 22 17" fill="none" stroke="#605e5c"><path d="M1 1h20v15H1z" stroke-width="1.800"/><path d="M4 7V4h4M14 4h4v3M18 10v3h-4M8 13H4v-3" stroke-width="1.300"/></svg></button>
  </div>
</footer>
</body>
</html>
```
FILE: styles.css
```css
* { box-sizing: border-box; }
body { margin: 0; height: 100vh; display: flex; flex-direction: column; overflow: hidden; background: #f3f2f1; color: #252423; font: 14px/20px "Open Sans", "Noto Sans", sans-serif; }
button, input { font: inherit; color: inherit; }
button { border: 0; padding: 0; background: none; }
a { color: inherit; text-decoration: none; }
svg { flex: none; display: block; }
h2, h3, ul { margin: 0; padding: 0; font-weight: 400; }
.defs { position: absolute; width: 0; height: 0; }
.bare { display: flex; align-items: center; }

/* title bar */
.titlebar { height: 43px; flex: none; display: grid; grid-template-columns: minmax(0, 19fr) 500px minmax(0, 14fr); gap: 12px; background: #3b3a38; color: #fff; align-items: center; padding-left: 21px; }
.title-left { display: flex; gap: 19px; align-items: center; }
.doc { gap: 10px; font-size: 14px; margin-left: -7px; padding-top: 4px; white-space: nowrap; }
.search-top { height: 30px; background: #d2d0ce; border-radius: 2px; display: flex; align-items: center; padding-left: 21px; gap: 14px; }
.search-top input { flex: 1; min-width: 0; border: 0; background: none; font-size: 16px; padding: 0; outline: 0; }
.search-top input::placeholder { color: #2b5b52; opacity: 1; }
.title-right { display: flex; justify-content: flex-end; align-items: center; }
.signin { gap: 12px; margin-right: 20px; }
.win { width: 55px; height: 43px; justify-content: center; }
.win:last-child { width: 52px; }

/* menu */
.menu { height: 42px; flex: none; display: flex; align-items: flex-start; gap: 41px; padding: 5px 6px 0 28px; background: #fafafa; font-size: 16px; }
.menu a { line-height: 30px; border-bottom: 3px solid transparent; }
.menu .file { margin-right: 8px; }
.menu .on { font-weight: 600; border-color: #117865; }
.share { margin-left: auto; width: 105px; height: 30px; border-radius: 4px; background: #117865; color: #fff; display: flex; align-items: center; justify-content: center; gap: 8px; font-size: 13px; font-weight: 600; }

/* ribbon */
.ribbon { height: 115px; flex: none; display: flex; background: #fafafa; border-bottom: 1px solid #e1dfdd; box-shadow: 0 1px 4px #0002; position: relative; z-index: 2; padding-top: 3px; }
.group { display: flex; flex-direction: column; height: 110px; border-right: 1px solid #d2d0ce; align-items: center; }
.group h2 { font-size: 12px; line-height: 12px; color: #3b3a39; }
.gbody { flex: 1; width: 100%; }
.g-themes { width: 613px; padding: 10px 10px 0; }
.g-scale { width: 79px; } .g-mobile { width: 72px; } .g-options { width: 152px; } .g-panes { width: 586px; }
.gallery { display: flex; gap: 12px; height: 76px; align-items: center; border: 1px solid #797775; background: #fff; padding-left: 6px; }
.thumb { width: 83px; height: 48px; border: 1px solid #3b3a39; text-align: left; padding: 1px 0 1px 2px; background: #fff; overflow: hidden; }
.thumb span { display: block; font-size: 13px; line-height: 16px; height: 17px; padding-left: 1px; }
.more { flex: 1; height: 74px; border-left: 1px solid #797775; margin-left: -7px; display: grid; place-items: center; background: #fafafa; }
.t1 { --a:#118dff; --b:#12239e; --c:#e66c37; --d:#6b007b; --e:#e044a7; --f:#744ec2; --g:#d9b300; --h:#d64550; }
.t2 { --a:#118dff; --b:#12239e; --c:#e66c37; --d:#6b007b; --e:#e044a7; --f:#4a2f77; --g:#1aab40; --h:#15483f; }
.t3 { --a:#5ba135; --b:#2f3c70; --c:#a9912b; --d:#7c1a2b; --e:#5f98d0; --f:#5b2182; --g:#e6701f; --h:#1b4a2c; }
.t4 { --a:#173f70; --b:#2587ff; --c:#1f4844; --d:#57a773; --e:#173f70; --f:#118dff; --g:#0f2a22; --h:#57a773; }
.t5 { --a:#6d7b7c; --b:#382e2d; --c:#b08c74; --d:#454f4f; --e:#8a999d; --f:#5b3a32; --g:#95918c; --h:#26282a; }
.t6 { --a:#374b59; --b:#c784ac; --c:#653a6a; --d:#6f9bbd; --e:#6b0030; --f:#5f8199; --g:#3d2340; --h:#ee62a8; }
.big { width: 100%; display: flex; flex-direction: column; align-items: center; gap: 5px; line-height: 20px; padding-top: 6px; font-size: 14px; }
.big span svg { display: inline-block; }
.checks { padding: 2px 0 0 22px; }
.checks label { display: flex; align-items: center; gap: 5px; height: 31px; }
input[type=checkbox] { appearance: none; flex: none; margin: 0; width: 20px; height: 20px; border: 1px solid #797775; background: #fff; }
.panes { display: flex; padding-left: 10px; }
.filters { width: 51px; height: 90px; border: 1px solid #3b3a39; background: #ebebeb; display: flex; flex-direction: column; align-items: center; gap: 3px; padding-top: 3px; }
.manager { width: 91px; height: 92px; margin-left: 3px; padding-top: 8px; gap: 7px; border: solid #d2d0ce; border-width: 0 1px; }
.pcol { display: flex; flex-direction: column; gap: 3px; }
.pcol button { display: flex; align-items: center; height: 30px; gap: 3px; white-space: nowrap; }
.pressed { width: 91px; margin-left: 8px; }
.pressed button { border: 1px solid #3b3a39; background: #ebebeb; padding-left: 9px; }
.plain { margin-left: 13px; width: 178px; }
.plain button { gap: 6px; }
.plain.last { width: auto; }
.plain.last button { gap: 5px; }
.pcol button:disabled { color: #c8c6c4; }
.collapse { margin: auto 5px 8px auto; }

/* work area */
.work { flex: 1; display: flex; min-height: 0; }
.views { width: 51px; flex: none; border-right: 1px solid #e1dfdd; }
.views button { width: 50px; height: 50px; display: grid; place-items: center; border-left: 3px solid transparent; padding-right: 3px; }
.views .on { border-color: #117865; }
.glyph { font: 700 8px "Open Sans", sans-serif; fill: #605e5c; stroke: none; }
.center { flex: 1; min-width: 0; display: flex; flex-direction: column; }
.center-top { flex: 1; display: flex; min-height: 0; }
.canvas { flex: 1; display: flex; background: #fff; padding: 0 11px 8px; }
.page { flex: 1; position: relative; border: 2px dotted #605e5c; border-top: 0; }
.visual { position: absolute; border: 1px solid #3b3a39; background: #fff; }
.v1 { left: 35px; top: 26px; width: 368px; height: 156px; padding-left: 6px; }
.v2 { left: 425px; top: 26px; width: 342px; height: 156px; padding-left: 6px; }
.v3 { left: 35px; top: 216px; width: 718px; height: 502px; padding-left: 6px; }
.s-category { left: 801px; top: 31px; width: 225px; height: 152px; }
.s-segment { left: 801px; top: 263px; width: 225px; height: 148px; }
.s-manager { left: 801px; top: 488px; width: 225px; height: 134px; }
.s-region { left: 1065px; top: 216px; width: 224px; height: 324px; }
.data { border-collapse: separate; border-spacing: 0; table-layout: fixed; width: 0; }
.data th, .data td { padding: 0 5px; text-align: left; font-weight: 400; white-space: nowrap; }
.data td.n { text-align: right; }
.data th { border-bottom: 1px solid #4ba3f5; }
.data tbody tr:nth-child(even) { background: #ebebeb; }
.data tfoot td { font-weight: 700; border-top: 2px solid #4ba3f5; }
.small { font-size: 13px; line-height: 16px; }
.small th { height: 35px; font-size: 12px; }
.small tbody td { height: 21px; }
.small tfoot td { height: 23px; }
.small tfoot .n { font-size: 14px; padding-left: 0; }
.large { font-size: 21px; line-height: 28px; }
.large th { height: 52px; padding-bottom: 6px; font-size: 20px; }
.large tbody td { height: 33px; }
.large tbody tr:nth-child(3n) td { height: 32px; }
.large tfoot td { height: 33px; }
.large tfoot .n { font-size: 22px; padding-left: 0; }
.w102 { width: 102px; } .w93 { width: 93px; } .w92 { width: 92px; } .w53 { width: 53px; }
.w155 { width: 155px; } .w79 { width: 79px; } .w142 { width: 142px; } .w204 { width: 204px; }
.slicer { padding: 4px 13px; }
.slicer h3 { display: flex; align-items: center; justify-content: space-between; font: 500 14px/20px Roboto, sans-serif; color: #3b3a39; }
.slicer h3 svg { color: #605e5c; }
.slicer label { display: flex; align-items: center; gap: 9px; height: 30px; font-size: 15px; color: #3b3a39; }
.slicer input[type=checkbox] { width: 16px; height: 16px; }
.filterpane { width: 41px; flex: none; background: #fff; border-left: 1px solid #a19f9d; display: flex; flex-direction: column; align-items: center; padding: 15px 0 0 1px; gap: 20px; }
.filterpane h2 { writing-mode: vertical-rl; font-size: 18px; font-weight: 600; margin-top: -10px; }

.tabs { height: 44px; flex: none; display: flex; }
.device { width: 30px; margin-left: 12px; padding: 9px 0 0; display: flex; flex-direction: column; align-items: center; justify-content: space-between; }
.device.on::after { content: ""; width: 30px; height: 3px; background: #117865; margin-bottom: 6px; border-radius: 1px; }
.phone { margin-left: 25px; padding-top: 6px; }
.arrow { width: 28px; display: grid; place-items: center; }
.phone + .arrow { margin-left: 9px; }
.tab { position: relative; background: #fff; border-left: 1px solid #c8c6c4; padding: 13px 26px 0; font-size: 14px; border-bottom: 0 solid #117865; }
.arrow + .tab { margin-left: -3px; }
.tab.on { font-weight: 600; border-bottom-width: 5px; }
.x { position: absolute; right: 5px; top: 3px; line-height: 16px; }
.add { width: 50px; background: #117865; display: grid; place-items: center; }

/* panes */
.pane { width: 227px; flex: none; border-left: 1px solid #e1dfdd; }
.pane header { display: flex; align-items: center; height: 48px; gap: 9px; padding: 0 11px 0 10px; }
.pane h2 { flex: 1; font-size: 19px; font-weight: 600; line-height: 24px; }
.build { width: 226px; padding-right: 10px; }
.build header { padding-right: 0; }
.build h3 { padding-left: 10px; font-size: 14px; line-height: 20px; margin-bottom: 4px; }
.icons { margin: 0 0 10px 10px; border: 1px solid #797775; border-radius: 2px; background: #fff; padding: 3px 4px; display: grid; grid-template-columns: repeat(6, 1fr); grid-template-rows: repeat(8, 1fr); height: 267px; place-items: center; }
.icons svg { width: 24px; height: 24px; overflow: visible; }
.num { font: 400 11px "Open Sans", sans-serif; fill: #1f87c9; }
.lang { font: 700 20px "Open Sans", sans-serif; fill: #1f7fbf; }
.well { margin: 5px 0 0 10px; border: 1px dashed #605e5c; border-radius: 2px; background: #fff; padding: 5px; }
.well button { width: 100%; height: 38px; border: 1px solid #605e5c; border-radius: 2px; font-weight: 600; font-size: 14px; }
.search-data { display: flex; align-items: center; gap: 9px; height: 31px; margin: 9px 6px 11px 5px; padding-left: 14px; background: #fff; border: 1px solid #d2d0ce; border-bottom-color: #605e5c; border-radius: 4px; }
.search-data input { flex: 1; min-width: 0; border: 0; outline: 0; padding: 0; background: none; font-size: 16px; }
.search-data input::placeholder { color: #605e5c; opacity: 1; }
.datapane li { display: grid; grid-template-columns: 8px 16px 1fr; column-gap: 8px; align-items: center; height: 30px; padding-left: 19px; font-size: 14px; white-space: nowrap; color: #3b3a39; }
.arr path { fill: none; stroke: #605e5c; stroke-width: 1.3; }
.rail { width: 39px; flex: none; background: #faf9f8; border-left: 1px solid #e1dfdd; display: flex; flex-direction: column; }
.rail button { height: 40px; display: grid; place-items: center; }
.rail .on { background: #e1dfdd; border: 1px solid #605e5c; }
.rail .gear { margin-top: auto; border-top: 1px solid #d2d0ce; }

/* status bar */
.status { height: 27px; flex: none; border-top: 1px solid #e1dfdd; display: flex; align-items: center; justify-content: space-between; padding: 4px 21px 0 5px; color: #3b3a39; }
.zoom { display: flex; align-items: center; gap: 6px; color: #605e5c; }
.zoom input { appearance: none; width: 125px; height: 14px; margin: 0; background: linear-gradient(#605e5c, #605e5c) 50% 50% / 100% 1px no-repeat, linear-gradient(#605e5c, #605e5c) 50% 50% / 1px 8px no-repeat; }
.zoom input::-webkit-slider-thumb { appearance: none; width: 5px; height: 13px; background: #605e5c; }
.pct { font-size: 14px; margin: 0 17px 0 10px; }
```
